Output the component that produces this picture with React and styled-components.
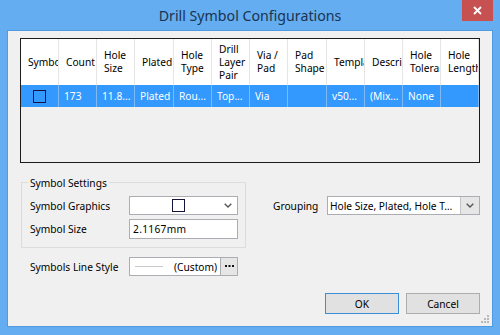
import React from 'react';
import styled, { createGlobalStyle } from 'styled-components';

const Global = createGlobalStyle`
  html, body { margin: 0; padding: 0; }
  body {
    width: 500px; height: 335px; overflow: hidden;
    background: #63adf0;
    font-family: "Noto Sans", "Segoe UI", sans-serif;
    font-size: 10.2px;
    color: #000;
  }
`;

const Window = styled.div`
  width: 500px; height: 335px; box-sizing: border-box;
  background: #63adf0;
  display: flex; flex-direction: column;
  padding: 0 8px 9px 8px;
`;

const TitleBar = styled.div`
  position: relative;
  height: 31px; flex: none;
  display: flex; align-items: center; justify-content: center;
  font-size: 14.2px; color: #1b3350;
  padding-bottom: 1px; box-sizing: border-box;
`;

const CloseButton = styled.div`
  position: absolute; top: 0; right: -1px;
  width: 31px; height: 21px;
  background: #c75050;
  display: flex; align-items: center; justify-content: center;
`;

const Client = styled.div`
  position: relative;
  flex: 1;
  background: #f0f0f0;
  box-shadow: 0 0 0 1px #4f9be2;
  padding: 7px 12px 0 12px;
  display: flex; flex-direction: column;
`;

const Table = styled.div`
  height: 125px; box-sizing: border-box; flex: none;
  border: 1px solid #1c1c1c;
  background: #f0f0f0;
  overflow: hidden;
`;

const Row = styled.div`
  display: grid;
  grid-template-columns: 38px 38px 38px 39px 38px 38px 38px 39px 38px 38px 38px 38px;
  height: ${p => p.$h}px;
  background: ${p => (p.$selected ? '#3399ff' : '#ffffff')};
  color: ${p => (p.$selected ? '#ffffff' : '#000000')};
`;

const HeadCell = styled.div`
  display: flex; align-items: center;
  padding-left: 7px;
  overflow: hidden;
  border-right: 1px solid #e5e5e5;
  line-height: 13px;
`;

const HeadText = styled.div`
  white-space: normal;
`;

const DataCell = styled.div`
  display: flex; align-items: center;
  justify-content: ${p => (p.$center ? 'center' : 'flex-start')};
  padding-left: ${p => (p.$center ? 0 : 5)}px;
  border-right: 1px solid #7fbaf3;
  white-space: nowrap; overflow: hidden;
`;

const SymbolBox = styled.div`
  width: 13px; height: 13px; box-sizing: border-box;
  border: 1px solid #14143a;
`;

const SettingsRow = styled.div`
  display: flex; align-items: flex-start;
  margin-top: 19px;
`;

const LeftCol = styled.div`
  width: 225px; margin-left: 1px;
  display: flex; flex-direction: column;
`;

const Group = styled.div`
  height: 66px; box-sizing: border-box;
  border: 1px solid #dcdcdc;
  padding: 0 0 0 8px;
`;

const GroupTitle = styled.div`
  width: fit-content;
  margin: -7px 0 0 -2px;
  padding: 0 2px;
  line-height: 14px;
  background: #f0f0f0;
`;

const FieldRow = styled.div`
  display: flex; align-items: center;
  height: ${p => p.$h}px;
  margin-top: ${p => p.$mt}px;
  padding-left: ${p => p.$pl || 0}px;
`;

const Label = styled.div`
  width: ${p => p.$w}px; flex: none;
  white-space: nowrap;
`;

const Box = styled.div`
  width: ${p => p.$w}px; height: 100%; box-sizing: border-box;
  background: #fff;
  border: 1px solid #abadb3;
  display: flex; align-items: center;
`;

const CenterGlyph = styled.div`
  flex: 1; display: flex; justify-content: center; padding-left: 7px;
`;

const Chevron = styled.div`
  width: 18px; height: 100%; flex: none;
  display: flex; align-items: center; justify-content: center;
  background: ${p => (p.$button ? '#e6e6e6' : 'transparent')};
  border-left: ${p => (p.$button ? '1px solid #c4c4c4' : 'none')};
`;

const InputText = styled.div`
  padding-left: 3px;
  letter-spacing: 0.3px;
`;

const ComboText = styled.div`
  flex: 1; padding-left: 2px; white-space: nowrap; overflow: hidden;
`;

const LineSample = styled.div`
  width: 28px; height: 1px; background: #c8c8c8;
  margin-left: 5px; flex: none;
`;

const CustomText = styled.div`
  flex: 1; padding-left: 11px;
`;

const DotsButton = styled.div`
  width: 16px; height: 100%; flex: none;
  background: #e6e6e6;
  border-left: 1px solid #adadad;
  display: flex; align-items: center; justify-content: center;
`;

const RightPart = styled.div`
  margin-left: 27px;
  padding-top: 14px;
  display: flex; align-items: center;
`;

const ButtonRow = styled.div`
  display: flex; justify-content: flex-end; gap: 7px;
  margin-top: 17px;
`;

const Button = styled.div`
  width: 74px; height: 21px; box-sizing: border-box;
  background: #e1e1e1;
  border: 1px solid ${p => (p.$default ? '#3c8ed8' : '#adadad')};
  display: flex; align-items: center; justify-content: center;
`;

const Grip = styled.svg`
  position: absolute; right: 3px; bottom: 3px;
`;

const ChevronIcon = () => (
  <svg width="8" height="5" viewBox="0 0 8 5">
    <path d="M0.7 0.7 L4 4 L7.3 0.7" stroke="#555" strokeWidth="1.4" fill="none" />
  </svg>
);

const headers = [
  'Symbol', 'Count', 'Hole Size', 'Plated', 'Hole Type', 'Drill Layer Pair',
  'Via / Pad', 'Pad Shape', 'Template', 'Description', 'Hole Tolerance', 'Hole Length',
];

const data = ['173', '11.8...', 'Plated', 'Rou...', 'Top...', 'Via', '', 'v50...', '(Mix...', 'None', ''];

export default function App() {
  return (
    <>
      <Global />
      <Window>
        <TitleBar>
          Drill Symbol Configurations
          <CloseButton>
            <svg width="9" height="9" viewBox="0 0 9 9">
              <path d="M1 1 L8 8 M8 1 L1 8" stroke="#fff" strokeWidth="1.8" />
            </svg>
          </CloseButton>
        </TitleBar>
        <Client>
          <Table>
            <Row $h={46}>
              {headers.map(h => (
                <HeadCell key={h}><HeadText>{h}</HeadText></HeadCell>
              ))}
            </Row>
            <Row $h={22} $selected>
              <DataCell $center><SymbolBox /></DataCell>
              {data.map((d, i) => (
                <DataCell key={i}>{d}</DataCell>
              ))}
            </Row>
          </Table>

          <SettingsRow>
            <LeftCol>
              <Group>
                <GroupTitle>Symbol Settings</GroupTitle>
                <FieldRow $h={19} $mt={6}>
                  <Label $w={99}>Symbol Graphics</Label>
                  <Box $w={109}>
                    <CenterGlyph><SymbolBox /></CenterGlyph>
                    <Chevron><ChevronIcon /></Chevron>
                  </Box>
                </FieldRow>
                <FieldRow $h={20} $mt={4}>
                  <Label $w={99}>Symbol Size</Label>
                  <Box $w={109}><InputText>2.1167mm</InputText></Box>
                </FieldRow>
              </Group>
              <FieldRow $h={19} $mt={9} $pl={9}>
                <Label $w={99}>Symbols Line Style</Label>
                <Box $w={109}>
                  <LineSample />
                  <CustomText>(Custom)</CustomText>
                  <DotsButton>
                    <svg width="9" height="3" viewBox="0 0 9 3">
                      <rect x="0" y="0" width="2" height="2" fill="#111" />
                      <rect x="3.5" y="0" width="2" height="2" fill="#111" />
                      <rect x="7" y="0" width="2" height="2" fill="#111" />
                    </svg>
                  </DotsButton>
                </Box>
              </FieldRow>
            </LeftCol>
            <RightPart>
              <FieldRow $h={19} $mt={0}>
                <Label $w={54}>Grouping</Label>
                <Box $w={153}>
                  <ComboText>Hole Size, Plated, Hole T…</ComboText>
                  <Chevron $button><ChevronIcon /></Chevron>
                </Box>
              </FieldRow>
            </RightPart>
          </SettingsRow>

          <ButtonRow>
            <Button $default>OK</Button>
            <Button>Cancel</Button>
          </ButtonRow>

          <Grip width="8" height="8" viewBox="0 0 8 8">
            <rect x="6" y="0" width="2" height="2" fill="#b8b8b8" />
            <rect x="3" y="3" width="2" height="2" fill="#b8b8b8" />
            <rect x="6" y="3" width="2" height="2" fill="#b8b8b8" />
            <rect x="0" y="6" width="2" height="2" fill="#b8b8b8" />
            <rect x="3" y="6" width="2" height="2" fill="#b8b8b8" />
            <rect x="6" y="6" width="2" height="2" fill="#b8b8b8" />
          </Grip>
        </Client>
      </Window>
    </>
  );
}
